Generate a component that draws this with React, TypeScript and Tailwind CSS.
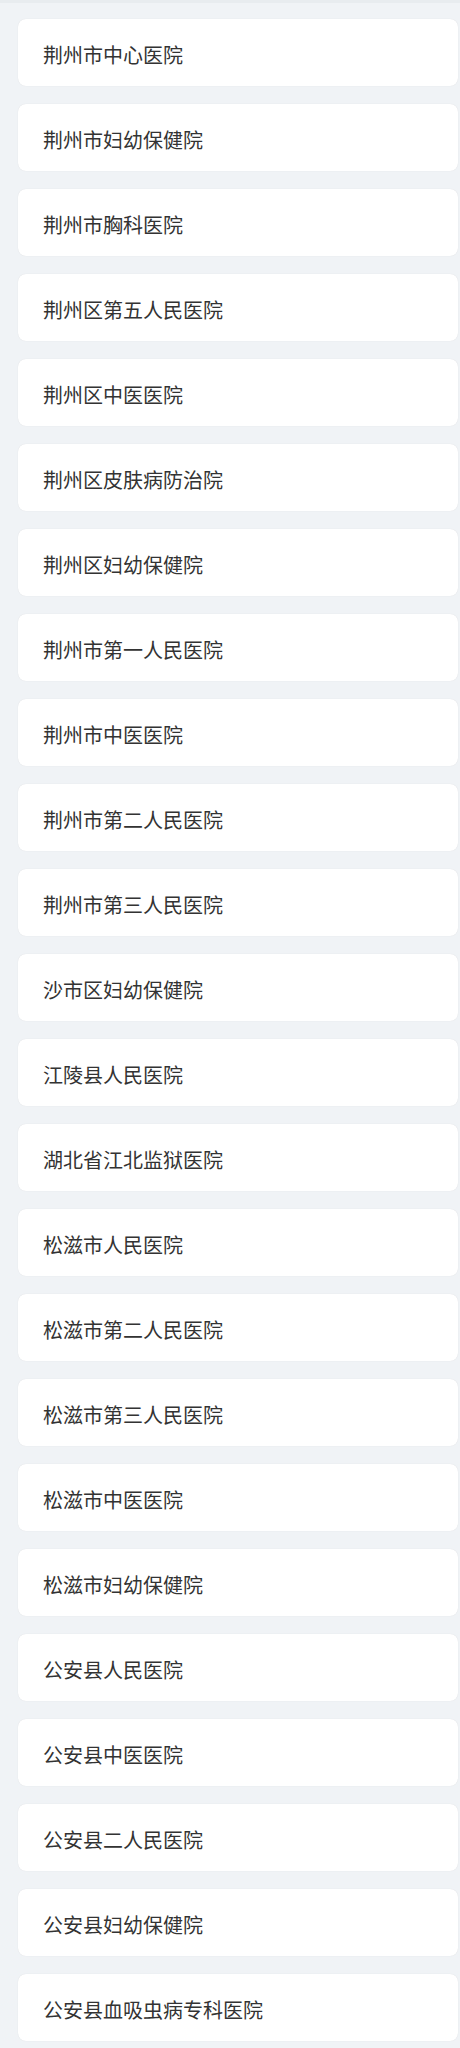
import React from "react";

const names = [
  "荆州市中心医院",
  "荆州市妇幼保健院",
  "荆州市胸科医院",
  "荆州区第五人民医院",
  "荆州区中医医院",
  "荆州区皮肤病防治院",
  "荆州区妇幼保健院",
  "荆州市第一人民医院",
  "荆州市中医医院",
  "荆州市第二人民医院",
  "荆州市第三人民医院",
  "沙市区妇幼保健院",
  "江陵县人民医院",
  "湖北省江北监狱医院",
  "松滋市人民医院",
  "松滋市第二人民医院",
  "松滋市第三人民医院",
  "松滋市中医医院",
  "松滋市妇幼保健院",
  "公安县人民医院",
  "公安县中医医院",
  "公安县二人民医院",
  "公安县妇幼保健院",
  "公安县血吸虫病专科医院",
];

export default function App() {
  return (
    <div
      className="min-h-[2048px] bg-[#f0f3f6] border-t-[3px] border-[#e8ecef]"
      style={{ fontFamily: '"Noto Sans CJK SC", "Noto Sans", sans-serif' }}
    >
      <div className="flex flex-col gap-[18px] pt-[16px] pl-[18px] pr-[2px]">
        {names.map((n, i) => (
          <div
            key={i}
            className="h-[67px] flex items-center rounded-lg bg-white px-[25px] pt-[4px] shadow-[0_0_1px_rgba(0,0,0,0.12)]"
          >
            <span className="text-[20px] text-[#333333] leading-none">{n}</span>
          </div>
        ))}
      </div>
    </div>
  );
}
